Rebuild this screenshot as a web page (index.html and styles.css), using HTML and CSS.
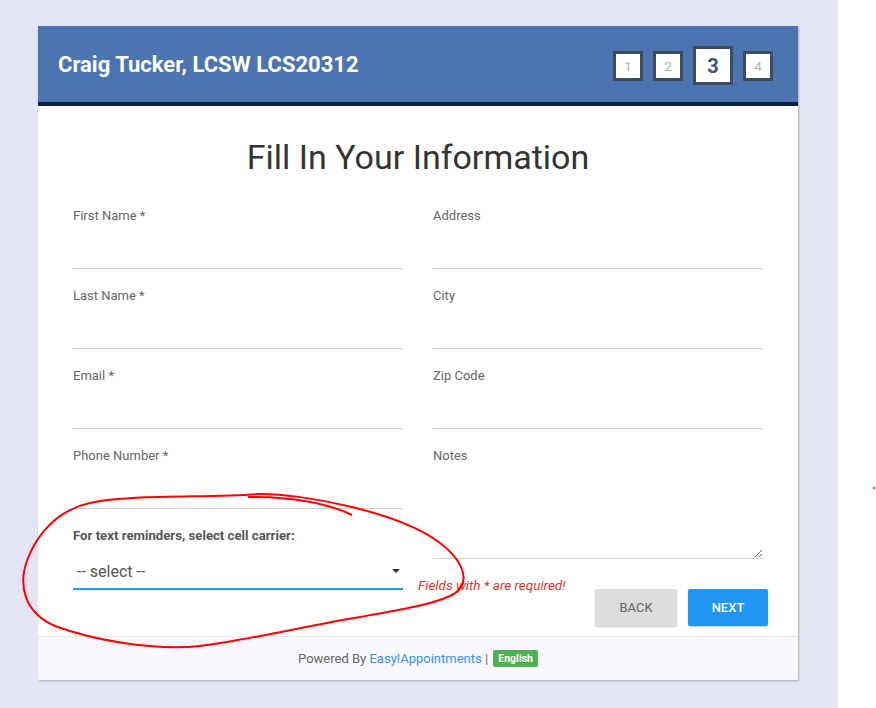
FILE: index.html
```html
<!DOCTYPE html>
<html lang="en">
<head>
<meta charset="utf-8">
<title>Fill In Your Information</title>
<link rel="stylesheet" href="styles.css">
</head>
<body>
<div class="page">
  <div class="card">
    <header class="card-header">
      <h1 class="provider">Craig Tucker, LCSW LCS20312</h1>
      <div class="steps">
        <span class="step">1</span>
        <span class="step">2</span>
        <span class="step active">3</span>
        <span class="step">4</span>
      </div>
    </header>
    <div class="card-body">
      <h2 class="title">Fill In Your Information</h2>
      <div class="form-grid">
        <div class="col">
          <div class="field">
            <label class="label">First Name *</label>
            <input class="input" type="text">
          </div>
          <div class="field">
            <label class="label">Last Name *</label>
            <input class="input" type="text">
          </div>
          <div class="field">
            <label class="label">Email *</label>
            <input class="input" type="text">
          </div>
          <div class="field">
            <label class="label">Phone Number *</label>
            <input class="input" type="text">
          </div>
          <div class="carrier">
            <label class="label label-bold">For text reminders, select cell carrier:</label>
            <div class="select-box">
              <span class="select-text">-- select --</span>
              <svg class="caret" width="8" height="4" viewBox="0 0 8 4"><polygon points="0,0 8,0 4,4" fill="#333"/></svg>
            </div>
          </div>
        </div>
        <div class="col">
          <div class="field">
            <label class="label">Address</label>
            <input class="input" type="text">
          </div>
          <div class="field">
            <label class="label">City</label>
            <input class="input" type="text">
          </div>
          <div class="field">
            <label class="label">Zip Code</label>
            <input class="input" type="text">
          </div>
          <div class="field field-notes">
            <label class="label">Notes</label>
            <textarea class="textarea"></textarea>
          </div>
          <div class="actions">
            <span class="required">Fields with * are required!</span>
            <button class="btn btn-back" type="button">Back</button>
            <button class="btn btn-next" type="button">Next</button>
          </div>
        </div>
      </div>
    </div>
    <footer class="card-footer">
      <span>Powered By</span>&nbsp;<a class="ea-link" href="#">Easy!Appointments</a>&nbsp;|&nbsp;<span class="badge">English</span>
    </footer>
  </div>
</div>
<svg class="annotation" width="876" height="708" viewBox="0 0 876 708">
  <path d="M 258 494 C 300 493, 400 512, 440 543 C 466 563, 472 586, 450 596 C 430 605, 400 610, 360 617 C 310 625, 250 640, 200 646 C 150 651, 90 639, 55 626 C 25 613, 17 586, 28 558 C 38 533, 58 510, 90 503 C 130 494, 210 498, 258 494"
        fill="none" stroke="#ff0000" stroke-width="2"/>
  <path d="M 248 497 C 290 496, 330 504, 352 515" fill="none" stroke="#ff0000" stroke-width="2"/>
  <rect x="873" y="487" width="2" height="2" fill="#ff2020"/>
</svg>
</body>
</html>
```

FILE: styles.css
```css
* { box-sizing: border-box; }

body {
  margin: 0;
  background: #ffffff;
  font-family: Roboto, "Liberation Sans", sans-serif;
  position: relative;
}

.page {
  width: 838px;
  min-height: 708px;
  background: #e3e5f4;
  padding: 26px 0 0 38px;
}

.card {
  width: 760px;
  background: #ffffff;
  box-shadow: 1px 1px 2px rgba(0, 0, 0, 0.25);
}

.card-header {
  height: 80px;
  background: #4b74b1;
  border-bottom: 4px solid #0c1f44;
  display: flex;
  align-items: center;
  justify-content: space-between;
  padding: 0 25px 0 20px;
}

.provider {
  margin: 0;
  color: #ffffff;
  font-size: 22px;
  font-weight: 700;
}

.steps {
  display: flex;
  align-items: center;
  gap: 10px;
  margin-top: 3px;
}

.step {
  width: 30px;
  height: 30px;
  border: 3px solid #3e4c5e;
  background: #ffffff;
  display: flex;
  align-items: center;
  justify-content: center;
  color: #a3b9bb;
  font-size: 13.5px;
}

.step.active {
  width: 40px;
  height: 39px;
  color: #3a5183;
  font-size: 20px;
  font-weight: 700;
}

.card-body {
  padding: 31px 35px 10px;
}

.title {
  margin: 0 0 30px;
  font-size: 34px;
  line-height: 40px;
  font-weight: 400;
  color: #333333;
  text-align: center;
}

.form-grid {
  display: grid;
  grid-template-columns: 330px 330px;
  column-gap: 30px;
}

.field {
  margin-bottom: 18px;
}

.label {
  display: block;
  font-size: 13px;
  line-height: 18px;
  color: #666666;
  margin-bottom: 6px;
}

.label-bold {
  font-size: 13.2px;
  font-weight: 700;
  color: #555555;
}

.input {
  display: block;
  width: 100%;
  height: 38px;
  border: 0;
  border-bottom: 1px solid #cdd5cd;
  background: transparent;
  font: inherit;
  outline: none;
}

.select-box {
  height: 39px;
  padding: 4px 3px 0 4px;
  border-bottom: 2px solid #2196f3;
  display: flex;
  align-items: center;
  justify-content: space-between;
}

.select-text {
  font-size: 16px;
  line-height: 20px;
  color: #555555;
}

.caret {
  display: block;
  margin-top: -1px;
}

.field-notes {
  margin-bottom: 0;
}

.textarea {
  display: block;
  width: 100%;
  height: 88px;
  border: 0;
  border-bottom: 1px solid #cdd5cd;
  resize: vertical;
  font: inherit;
  outline: none;
}

.actions {
  display: flex;
  align-items: flex-start;
  margin: 17px -5px 0 -15px;
}

.required {
  flex: 1;
  font-style: italic;
  font-size: 13.5px;
  line-height: 18px;
  color: #d9342b;
}

.btn {
  margin-top: 13px;
  height: 37px;
  border: 0;
  border-radius: 2px;
  font-family: inherit;
  font-size: 13px;
  text-transform: uppercase;
  box-shadow: 0 1px 2px rgba(0, 0, 0, 0.2);
}

.btn-back {
  width: 82px;
  background: #dcdcdc;
  color: #666666;
}

.btn-next {
  width: 80px;
  margin-left: 11px;
  background: #2196f3;
  color: #ffffff;
  font-weight: 500;
}

.card-footer {
  height: 44px;
  border-top: 1px solid #e6e6e6;
  background: #f8f7fb;
  display: flex;
  align-items: center;
  justify-content: center;
  font-size: 13px;
  color: #666666;
}

.ea-link {
  color: #3a8fe6;
  text-decoration: none;
}

.badge {
  background: #4caf50;
  color: #ffffff;
  font-size: 10.5px;
  font-weight: 700;
  padding: 2px 5px;
  border-radius: 2px;
  margin-left: 2px;
}

.annotation {
  position: absolute;
  top: 0;
  left: 0;
  pointer-events: none;
}
```
